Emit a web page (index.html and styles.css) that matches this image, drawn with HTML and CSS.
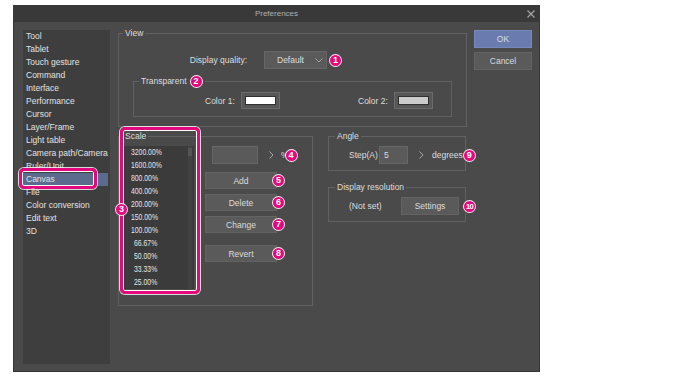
FILE: index.html
```html
<!DOCTYPE html>
<html lang="en">
<head>
    <meta charset="UTF-8">
    <meta name="viewport" content="width=device-width, initial-scale=1.0">
    <title>Preferences</title>
    <link rel="stylesheet" href="styles.css">
</head>
<body>
    <div class="dialog">
        <div class="titlebar">
            <span></span>
            <span class="title">Preferences</span>
            <svg class="close" width="8" height="8" viewBox="0 0 8 8">
                <path d="M0.5 0.5 L7.5 7.5 M7.5 0.5 L0.5 7.5" stroke="#a9a9a9" stroke-width="1.1" fill="none"/>
            </svg>
        </div>

        <div class="dialog-body">
            <!-- category list -->
            <ul class="category-list">
                <li>Tool</li>
                <li>Tablet</li>
                <li>Touch gesture</li>
                <li>Command</li>
                <li>Interface</li>
                <li>Performance</li>
                <li>Cursor</li>
                <li>Layer/Frame</li>
                <li>Light table</li>
                <li>Camera path/Camera</li>
                <li>Ruler/Unit</li>
                <li class="selected">Canvas<span class="callout callout-canvas"></span></li>
                <li>File</li>
                <li>Color conversion</li>
                <li>Edit text</li>
                <li>3D</li>
            </ul>

            <div class="settings">
                <div class="group view-group">
                    <span class="group-title">View</span>
                    <div class="quality-row">
                        <span class="quality-label">Display quality:</span>
                        <div class="dropdown">
                            <span>Default</span>
                            <svg width="8" height="5" viewBox="0 0 8 5">
                                <polyline points="0.5,0.5 4,4 7.5,0.5" stroke="#a3a3a3" stroke-width="1" fill="none"/>
                            </svg>
                        </div>
                        <span class="badge">1</span>
                    </div>

                    <div class="group transparent-group">
                        <span class="group-title">Transparent <span class="badge">2</span></span>
                        <div class="color-row">
                            <div class="color-field">
                                <span class="color-label">Color 1:</span>
                                <span class="swatch"><span class="swatch-fill fill-white"></span></span>
                            </div>
                            <div class="color-field second">
                                <span class="color-label">Color 2:</span>
                                <span class="swatch"><span class="swatch-fill fill-grey"></span></span>
                            </div>
                        </div>
                    </div>
                </div>

                <div class="lower-row">
                    <div class="group scale-group">
                        <span class="group-title">Scale</span>
                        <div class="scale-list">
                            <ul>
                                <li>3200.00%</li>
                                <li>1600.00%</li>
                                <li>800.00%</li>
                                <li>400.00%</li>
                                <li>200.00%</li>
                                <li>150.00%</li>
                                <li>100.00%</li>
                                <li class="short">66.67%</li>
                                <li class="short">50.00%</li>
                                <li class="short">33.33%</li>
                                <li class="short">25.00%</li>
                            </ul>
                            <div class="scrollbar"><div class="thumb"></div></div>
                        </div>

                        <div class="scale-controls">
                            <div class="value-row">
                                <div class="field value-input"></div>
                                <svg class="arrow" width="5" height="8" viewBox="0 0 5 8">
                                    <polyline points="0.5,0.5 4,4 0.5,7.5" stroke="#a5a5a5" stroke-width="1" fill="none"/>
                                </svg>
                                <span class="unit">%</span>
                                <span class="badge">4</span>
                            </div>
                            <div class="button-row first">
                                <button class="btn btn-wide">Add</button>
                                <span class="badge">5</span>
                            </div>
                            <div class="button-row">
                                <button class="btn btn-wide">Delete</button>
                                <span class="badge">6</span>
                            </div>
                            <div class="button-row">
                                <button class="btn btn-wide">Change</button>
                                <span class="badge">7</span>
                            </div>
                            <div class="button-row revert">
                                <button class="btn btn-wide">Revert</button>
                                <span class="badge">8</span>
                            </div>
                        </div>

                        <span class="callout callout-scale"></span>
                        <span class="badge badge-scale">3</span>
                    </div>

                    <div class="side-groups">
                        <div class="group small-group">
                            <span class="group-title">Angle</span>
                            <span class="step-label">Step(A)</span>
                            <div class="field step-input">5</div>
                            <svg class="arrow" width="5" height="8" viewBox="0 0 5 8">
                                <polyline points="0.5,0.5 4,4 0.5,7.5" stroke="#a5a5a5" stroke-width="1" fill="none"/>
                            </svg>
                            <span class="degrees">degrees</span>
                            <span class="badge">9</span>
                        </div>
                        <div class="group small-group resolution-group">
                            <span class="group-title">Display resolution</span>
                            <span class="notset-label">(Not set)</span>
                            <button class="btn btn-settings">Settings</button>
                            <span class="badge badge-wide">10</span>
                        </div>
                    </div>
                </div>
            </div>

            <div class="dialog-buttons">
                <button class="btn btn-ok">OK</button>
                <button class="btn">Cancel</button>
            </div>
        </div>
    </div>
</body>
</html>
```

FILE: styles.css
```css
:root {
    --bg: #4a4a4a;
    --bg-dark: #3e3e3e;
    --title-bg: #393939;
    --line: #616161;
    --field: #5a5a5a;
    --field-line: #666666;
    --text: #dedede;
    --text-dim: #b0b0b0;
    --pink: #e3087e;
    --selected: #5b6b8d;
    --ok: #6a7caf;
}

* {
    box-sizing: border-box;
}

body {
    margin: 0;
    background: #ffffff;
    font-family: "Liberation Sans", Arial, sans-serif;
    font-size: 8.5px;
    color: var(--text);
}

.dialog {
    width: 527px;
    height: 367px;
    margin: 5px 0 0 13px;
    background: var(--bg);
    display: flex;
    flex-direction: column;
}

.titlebar {
    height: 17px;
    flex: none;
    background: var(--title-bg);
    display: grid;
    grid-template-columns: 1fr auto 1fr;
    align-items: center;
}

.titlebar .title {
    color: var(--text-dim);
    font-size: 8px;
}

.titlebar .close {
    justify-self: end;
    margin-right: 5px;
}

.dialog-body {
    flex: 1;
    display: flex;
    padding: 8px 7px 7px 9px;
    border: 1px solid #353535;
    border-top: none;
}

/* category list */
.category-list {
    width: 87px;
    flex: none;
    margin: 0;
    padding: 0;
    list-style: none;
    background: var(--bg-dark);
}

.category-list li {
    position: relative;
    line-height: 13px;
    padding-left: 3px;
    white-space: nowrap;
    color: #e2e2e2;
}

.category-list li.selected {
    background: var(--selected);
    margin-right: 2px;
}

/* annotation marks */
.callout {
    position: absolute;
    border: 3px solid var(--pink);
    border-radius: 5px;
    box-shadow: 0 0 0 1px rgba(255, 255, 255, 0.8), inset 0 0 0 1px #ffffff;
}

.callout-canvas {
    left: -4px;
    top: -5px;
    width: 78px;
    height: 21px;
}

.badge {
    flex: none;
    width: 13px;
    height: 13px;
    border-radius: 50%;
    border: 1px solid rgba(255, 255, 255, 0.9);
    background: var(--pink);
    color: #ffffff;
    font-size: 9px;
    font-weight: bold;
    line-height: 1;
    display: inline-flex;
    align-items: center;
    justify-content: center;
}

.badge-wide {
    font-size: 7.5px;
    letter-spacing: -0.6px;
}

/* main settings */
.settings {
    width: 349px;
    flex: none;
    margin-left: 8px;
    padding-top: 3px;
}

.group {
    position: relative;
    border: 1px solid var(--line);
}

.group-title {
    position: absolute;
    top: -6px;
    left: 4px;
    padding: 0 2px;
    line-height: 11px;
    background: var(--bg);
    display: flex;
    align-items: center;
    gap: 3px;
    white-space: nowrap;
}

.view-group {
    height: 94px;
    padding: 17px 14px 0;
}

.quality-row {
    display: flex;
    align-items: center;
    height: 18px;
}

.quality-label {
    width: 114px;
    margin-right: 17px;
    text-align: right;
}

.dropdown {
    width: 63px;
    height: 18px;
    background: var(--field);
    border: 1px solid var(--field-line);
    display: flex;
    align-items: center;
    padding: 0 3px 0 12px;
    margin-right: 2px;
}

.dropdown span {
    flex: 1;
}

.transparent-group {
    margin-top: 12px;
    height: 36px;
}

.transparent-group .group-title {
    left: 5px;
    top: -7px;
}

.color-row {
    display: flex;
    align-items: center;
    padding: 10px 0 0 71px;
}

.color-field {
    display: flex;
    align-items: center;
}

.color-field.second {
    margin-left: 78px;
}

.color-label {
    width: 36px;
}

.swatch {
    display: block;
    width: 39px;
    height: 17px;
    padding: 3px;
    background: #575757;
    border: 1px solid #6b6b6b;
}

.swatch-fill {
    display: block;
    height: 100%;
    border: 1px solid #2f2f2f;
}

.fill-white {
    background: #ffffff;
}

.fill-grey {
    background: #cbcbcb;
}

/* lower area */
.lower-row {
    display: flex;
    margin-top: 9px;
}

.scale-group {
    width: 195px;
    height: 170px;
    flex: none;
    padding: 9px 0 0 5px;
    display: flex;
    align-items: flex-start;
}

.scale-list {
    width: 70px;
    height: 143px;
    flex: none;
    background: #3b3b3b;
    display: flex;
}

.scale-list ul {
    flex: 1;
    margin: 0;
    padding: 0 0 0 7px;
    list-style: none;
    font-size: 9px;
    line-height: 13px;
    color: #e6e6e6;
}

.scale-list li {
    transform: scaleX(0.76);
    transform-origin: left center;
}

.scale-list li.short {
    padding-left: 4px;
}

.scrollbar {
    width: 4px;
    background: #424242;
    margin-right: 2px;
}

.scrollbar .thumb {
    height: 8px;
    margin-top: 2px;
    background: #555555;
}

.scale-controls {
    margin-left: 11px;
    display: flex;
    flex-direction: column;
}

.value-row {
    display: flex;
    align-items: center;
    height: 18px;
    padding-left: 7px;
}

.field {
    flex: none;
    height: 18px;
    background: var(--field);
    border: 1px solid var(--field-line);
}

.value-input {
    width: 46px;
}

.value-row .arrow {
    margin-left: 11px;
}

.unit {
    margin-left: 7px;
    margin-right: -4px;
}

.button-row {
    display: flex;
    align-items: center;
    margin-top: 5px;
}

.button-row.first {
    margin-top: 8px;
}

.button-row.revert {
    margin-top: 12px;
}

.button-row .badge {
    margin-left: -5px;
}

.btn {
    flex: none;
    font: inherit;
    color: #dcdcdc;
    background: var(--field);
    border: 1px solid #636363;
    height: 18px;
    padding: 0;
}

.btn-wide {
    width: 72px;
    height: 17px;
}

.callout-scale {
    left: 1px;
    top: -10px;
    width: 80px;
    height: 167px;
}

.badge-scale {
    position: absolute;
    left: -4px;
    top: 66px;
}

.side-groups {
    width: 138px;
    margin-left: 15px;
}

.small-group {
    height: 35px;
    padding: 9px 0 0 20px;
    display: flex;
    align-items: flex-start;
}

.small-group > * {
    flex: none;
}

.small-group .group-title {
    left: 6px;
}

.step-label {
    width: 30px;
    line-height: 18px;
}

.step-input {
    width: 29px;
    padding-left: 4px;
    line-height: 16px;
}

.small-group .arrow {
    margin: 5px 0 0 11px;
}

.degrees {
    margin-left: 8px;
    line-height: 18px;
}

.small-group .badge {
    margin: 3px 0 0 0;
}

.resolution-group {
    margin-top: 16px;
}

.notset-label {
    width: 52px;
    line-height: 18px;
}

.btn-settings {
    width: 58px;
}

.resolution-group .badge {
    margin: 3px 0 0 4px;
}

/* dialog buttons */
.dialog-buttons {
    width: 58px;
    flex: none;
    margin-left: 7px;
    display: flex;
    flex-direction: column;
    gap: 4px;
}

.btn-ok {
    background: var(--ok);
    border-color: #7688ba;
}
```
